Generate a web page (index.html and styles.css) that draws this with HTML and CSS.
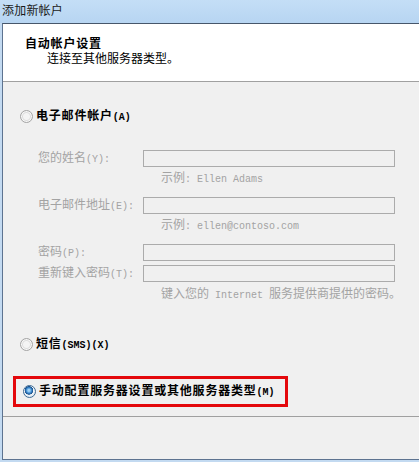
FILE: index.html
```html
<!DOCTYPE html>
<html lang="zh-CN">
<head>
<meta charset="utf-8">
<title>添加新帐户</title>
<link rel="stylesheet" href="styles.css">
</head>
<body>
<div class="window">
  <div class="titlebar">添加新帐户</div>
  <div class="client">
    <div class="header">
      <div class="h-title">自动帐户设置</div>
      <div class="h-sub">连接至其他服务器类型。</div>
    </div>
    <div class="content">
      <div class="radio-row first">
        <span class="radio"></span>
        <span class="bold">电子邮件帐户<span class="lat">(A)</span></span>
      </div>
      <div class="form">
        <div class="field f1">
          <span class="label">您的姓名<span class="lat">(Y):</span></span>
          <span class="input"></span>
        </div>
        <div class="hint">示例<span class="lat">: Ellen Adams</span></div>
        <div class="field f2">
          <span class="label">电子邮件地址<span class="lat">(E):</span></span>
          <span class="input"></span>
        </div>
        <div class="hint">示例<span class="lat">: ellen@contoso.com</span></div>
        <div class="field f3">
          <span class="label">密码<span class="lat">(P):</span></span>
          <span class="input"></span>
        </div>
        <div class="field f4">
          <span class="label">重新键入密码<span class="lat">(T):</span></span>
          <span class="input"></span>
        </div>
        <div class="hint h3">键入您的<span class="lat"> Internet </span>服务提供商提供的密码。</div>
      </div>
      <div class="radio-row sms">
        <span class="radio"></span>
        <span class="bold">短信<span class="lat">(SMS)(X)</span></span>
      </div>
      <div class="highlight">
        <div class="radio-row manual">
          <span class="radio checked"></span>
          <span class="bold">手动配置服务器设置或其他服务器类型<span class="lat">(M)</span></span>
        </div>
      </div>
    </div>
    <div class="footer"></div>
  </div>
</div>
</body>
</html>
```

FILE: styles.css
```css
* { box-sizing: border-box; }
html, body { margin: 0; padding: 0; }
body {
  width: 419px;
  height: 462px;
  overflow: hidden;
  background: #c3daf1;
  font-family: "Noto Sans CJK SC", "Noto Sans", sans-serif;
  font-size: 12px;
  line-height: 14px;
  color: #000;
}
.window {
  height: 462px;
  display: flex;
  flex-direction: column;
}
.titlebar {
  height: 23px;
  padding: 3px 0 0 2px;
  background: linear-gradient(#c4def6, #b7d5f2);
  color: #1a1a1a;
  font-size: 12px;
  letter-spacing: 0.2px;
}
.client {
  margin-left: 2px;
  height: 437px;
  border-left: 1px solid #5d7390;
  border-top: 1px solid #46566a;
  border-bottom: 1px solid #5d7390;
  display: flex;
  flex-direction: column;
}
.header {
  height: 58px;
  background: #fff;
  border-bottom: 1px solid #a0a0a0;
  padding: 12px 0 0 22px;
}
.h-title {
  font-weight: bold;
  letter-spacing: 0.8px;
  height: 14px;
}
.h-sub {
  margin: 1px 0 0 22px;
}
.content {
  background: #f0f0f0;
  height: 335px;
  padding-top: 27px;
  border-bottom: 1px solid #a0a0a0;
}
.radio-row {
  display: flex;
  align-items: center;
  height: 14px;
  padding-left: 17px;
  gap: 3px;
}
.bold {
  font-weight: bold;
  letter-spacing: 0.8px;
}
.lat {
  font-family: "Liberation Mono", monospace;
  font-size: 10px;
  letter-spacing: 0;
}
.radio {
  width: 13px;
  height: 13px;
  border-radius: 50%;
  border: 1px solid #a4a4a4;
  background: radial-gradient(circle at 50% 50%, #f4f4f4 0 3px, #dcdcdc 4px, #e8e8e8 6px);
  box-shadow: inset 0 0 0 1px #f8f8f8;
  flex: none;
}
.radio.checked {
  border-color: #3d6a94;
  background: radial-gradient(circle at 45% 40%, #9fd3f7 0 1px, #2f7cc4 3px, #1d4f86 4px, #f2f6fa 4.5px, #e3ebf2 6px);
  box-shadow: none;
}
.form {
  padding-left: 35px;
  margin-top: 27px;
  color: #a3a3a3;
}
.field {
  display: flex;
  align-items: center;
  height: 17px;
}
.label { width: 105px; }
.input {
  width: 252px;
  height: 17px;
  border: 1px solid #ababab;
  background: #f0f0f0;
}
.hint {
  margin: 3px 0 0 123px;
  height: 14px;
  color: #a3a3a3;
}
.f2, .f3 { margin-top: 13px; }
.f4 { margin-top: 4px; }
.h3 { margin-top: 4px; }
.sms { margin-top: 37px; }
.highlight {
  margin: 25px 0 0 10px;
  width: 275px;
  height: 31px;
  border: 3px solid #e4080c;
  display: flex;
  align-items: center;
}
.manual { padding-left: 7px; }
.footer {
  flex: 1;
  background: #f0f0f0;
}
```
